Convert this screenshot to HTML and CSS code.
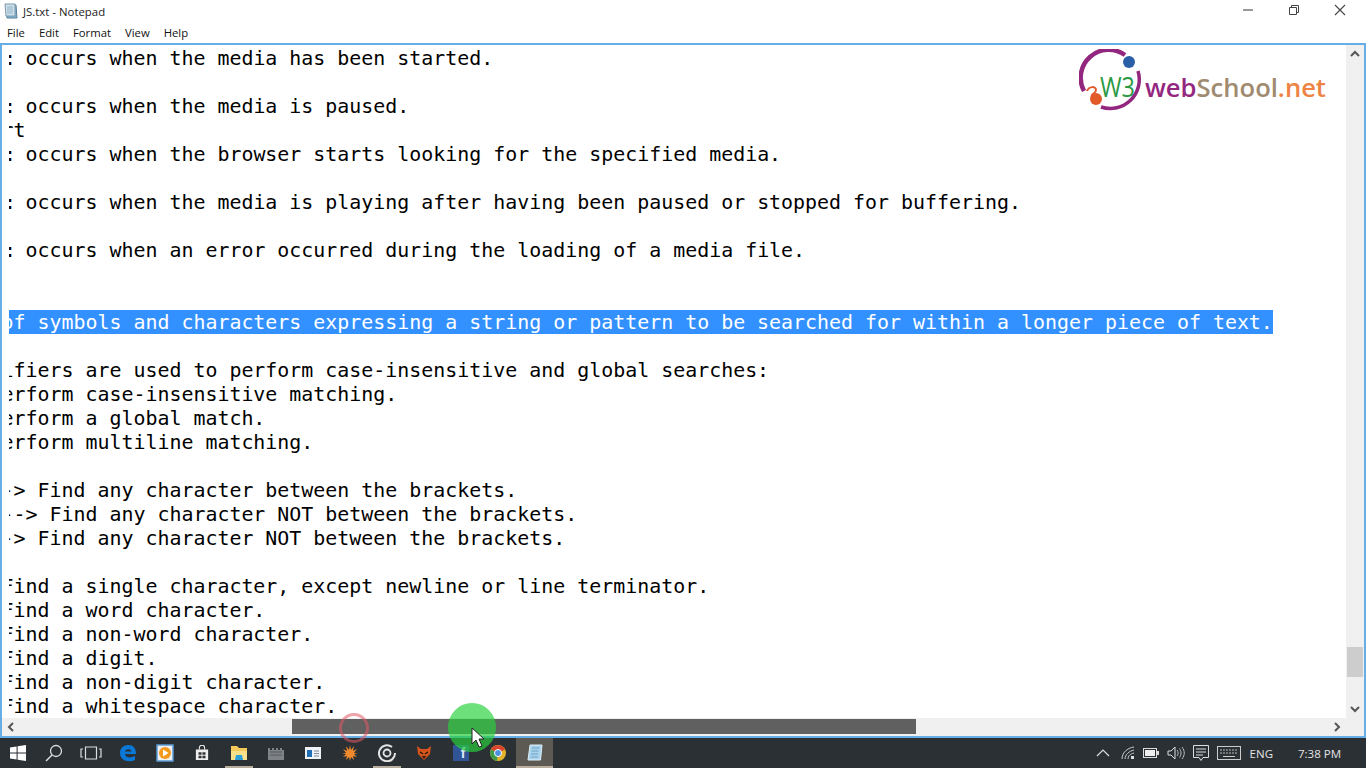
FILE: index.html
```html
<!DOCTYPE html>
<html lang="en">
<head>
    <meta charset="UTF-8">
    <meta name="viewport" content="width=device-width, initial-scale=1.0">
    <title>JS.txt - Notepad</title>
    <link rel="stylesheet" href="styles.css">
</head>
<body>
    <div class="window">
        <div class="titlebar">
            <svg class="app-icon" width="16" height="16" viewBox="0 0 16 16">
                <path d="M3 2h10l1 13H4z" fill="#7fb6d6" stroke="#5c7f96"/>
                <path d="M2 1h10v12H3z" fill="#cfe3ee" stroke="#7b97a8"/>
                <path d="M4 4h6M4 6h6M4 8h6M4 10h6" stroke="#93b2c4"/>
            </svg>
            <span class="title">JS.txt - Notepad</span>
            <div class="win-controls">
                <span class="win-btn"><svg width="12" height="12" viewBox="0 0 12 12"><path d="M1 6h10" stroke="#555" stroke-width="1.2"/></svg></span>
                <span class="win-btn"><svg width="12" height="12" viewBox="0 0 12 12"><path d="M1.5 3.5h7v7h-7zM3.5 3.5v-2h7v7h-2" fill="none" stroke="#444"/></svg></span>
                <span class="win-btn"><svg width="12" height="12" viewBox="0 0 12 12"><path d="M1 1l10 10M11 1L1 11" stroke="#444" stroke-width="1.1"/></svg></span>
            </div>
        </div>
        <div class="menubar">
            <span>File</span><span>Edit</span><span>Format</span><span>View</span><span>Help</span>
        </div>
        <div class="client">
            <div class="editor">
                <pre class="text"><span class="colon">:</span> occurs when the media has been started.

<span class="colon">:</span> occurs when the media is paused.
rt
<span class="colon">:</span> occurs when the browser starts looking for the specified media.

<span class="colon">:</span> occurs when the media is playing after having been paused or stopped for buffering.

<span class="colon">:</span> occurs when an error occurred during the loading of a media file.


<span class="selected">of symbols and characters expressing a string or pattern to be searched for within a longer piece of text.</span>

ifiers are used to perform case-insensitive and global searches:
erform case-insensitive matching.
erform a global match.
erform multiline matching.

-> Find any character between the brackets.
--> Find any character NOT between the brackets.
-> Find any character NOT between the brackets.

Find a single character, except newline or line terminator.
Find a word character.
Find a non-word character.
Find a digit.
Find a non-digit character.
Find a whitespace character.</pre>
            </div>
            <div class="vscroll">
                <svg class="arrow" width="18" height="18" viewBox="0 0 18 18"><path d="M5 11l4-4 4 4" fill="none" stroke="#555" stroke-width="2"/></svg>
                <div class="vtrack"><div class="vthumb"></div></div>
                <svg class="arrow" width="18" height="18" viewBox="0 0 18 18"><path d="M5 7l4 4 4-4" fill="none" stroke="#555" stroke-width="2"/></svg>
            </div>
            <div class="hscroll">
                <svg class="arrow" width="18" height="18" viewBox="0 0 18 18"><path d="M11 5L7 9l4 4" fill="none" stroke="#555" stroke-width="2"/></svg>
                <div class="htrack"><div class="hthumb"></div></div>
                <svg class="arrow" width="18" height="18" viewBox="0 0 18 18"><path d="M7 5l4 4-4 4" fill="none" stroke="#555" stroke-width="2"/></svg>
            </div>
            <div class="corner"></div>
        </div>
    </div>

    <div class="taskbar">
        <div class="task"><svg width="18" height="18" viewBox="0 0 18 18"><path d="M1 3.4l6.6-.9v6H1zM8.6 2.3L17 1v7.5H8.6zM1 9.6h6.6v6L1 14.6zM8.6 9.6H17V17l-8.4-1.2z" fill="#fff"/></svg></div>
        <div class="task"><svg width="20" height="20" viewBox="0 0 20 20"><circle cx="12" cy="8" r="5.5" fill="none" stroke="#ddd" stroke-width="1.3"/><path d="M8 12l-6 6" stroke="#ddd" stroke-width="1.5"/></svg></div>
        <div class="task"><svg width="22" height="16" viewBox="0 0 22 16"><path d="M5.5 2h11v12h-11zM3 4H1v8h2M19 4h2v8h-2" fill="none" stroke="#ddd" stroke-width="1.2"/></svg></div>
        <div class="task"><svg width="18" height="18" viewBox="0 0 18 18"><path d="M1 9C1 4 4.500 1 9.500 1 14 1 17 4 17 10H6c.3 3.500 5.500 4.500 10 2v4c-6 2.800-15 1-15-7zM6 7.400h6.500C12.300 4.500 6.500 4.500 6 7.400z" fill="#0a78d7"/></svg></div>
        <div class="task"><svg width="18" height="18" viewBox="0 0 18 18"><rect x="1" y="1" width="16" height="16" fill="#f0f0f0" stroke="#5b9bd5" stroke-width="1.500"/><circle cx="9" cy="9" r="6" fill="#f39a1e"/><path d="M7 5.500L12.500 9 7 12.500z" fill="#fff"/></svg></div>
        <div class="task"><svg width="14" height="16" viewBox="0 0 16 18"><path d="M1 5h14v12H1z" fill="#eee"/><path d="M5 5V3a3 3 0 0 1 6 0v2" fill="none" stroke="#eee" stroke-width="1.200"/><path d="M4 8h3.500v3H4zM8.500 8H12v3H8.500zM4 12h3.500v3H4zM8.500 12H12v3H8.500z" fill="#2f3337"/></svg></div>
        <div class="task task-open"><svg width="18" height="16" viewBox="0 0 18 16"><path d="M1 1h6l2 2h8v12H1z" fill="#f5c95c"/><path d="M1 6h16v9H1z" fill="#fbe08c"/><path d="M6 10h6l1 5H5z" fill="#2c9fd8"/></svg></div>
        <div class="task"><svg width="16" height="14" viewBox="0 0 16 14"><path d="M0 2h2v2h2V2h2v2h2V2h2v2h2V2h2v2h2v10H0z" fill="#7f8387"/><path d="M2 6h12M2 9h12" stroke="#56595c"/></svg></div>
        <div class="task"><svg width="16" height="12" viewBox="0 0 16 12"><rect width="16" height="12" fill="#eef1f5"/><rect x="2" y="3" width="5" height="7" fill="#1f6db5"/><path d="M9 4h5M9 6.500h5M9 9h5" stroke="#7c8a99"/></svg></div>
        <div class="task"><svg width="16" height="16" viewBox="0 0 16 16"><path d="M8 0l1 5 3-4-1 5 4-2-3 4 4 0-4 1 3 3-4-1 1 4-3-3-1 4-1-4-3 3 1-4-4 1 3-3-4-1 4 0-3-4 4 2-1-5 3 4z" fill="#f08a2c"/></svg></div>
        <div class="task task-open"><svg width="18" height="18" viewBox="0 0 18 18"><path d="M14 3a8 8 0 1 0 3 6" fill="none" stroke="#e4e4e4" stroke-width="2"/><circle cx="9" cy="9" r="3.500" fill="none" stroke="#e4e4e4" stroke-width="1.800"/></svg></div>
        <div class="task"><svg width="16" height="16" viewBox="0 0 16 16"><path d="M1 1l4 3h6l4-3-1 8-6 6-6-6z" fill="#d4541c"/><path d="M4 7l3 2M12 7L9 9" stroke="#2a1608" stroke-width="1.500"/><path d="M6 11h4l-2 3z" fill="#2a1608"/></svg></div>
        <div class="task"><div class="fb">f</div></div>
        <div class="task"><svg width="16" height="16" viewBox="0 0 16 16"><circle cx="8" cy="8" r="8" fill="#e2b32a"/><path d="M8 8L1 4.500A8 8 0 0 1 15 4.500z" fill="#d9432f"/><path d="M8 8l-7-3.500A8 8 0 0 0 7 16z" fill="#3d9b4a"/><circle cx="8" cy="8" r="3.500" fill="#4a8fe0" stroke="#fff"/></svg></div>
        <div class="task task-active"><svg width="16" height="18" viewBox="0 0 16 18"><path d="M3 2h12l-1.500 15H1z" fill="#a9d3ec" stroke="#dff0f9"/><path d="M5 5h7M4.500 8h7M4 11h7M3.800 14h7" stroke="#6fa3c4"/></svg></div>

        <div class="tray">
            <svg width="14" height="14" viewBox="0 0 14 14"><path d="M1 10l6-6 6 6" fill="none" stroke="#ddd" stroke-width="1.200"/></svg>
            <svg class="tray-wifi" width="14" height="14" viewBox="0 0 14 14"><path d="M1 13C1 7 6 2 13 1M4 13c0-4 4-8 9-9M7 13c0-3 2-5 6-6" fill="none" stroke="#ccc"/><path d="M10 10h3v3h-3z" fill="#ddd"/></svg>
            <svg width="16" height="10" viewBox="0 0 16 10"><rect x=".5" y=".5" width="13" height="9" fill="none" stroke="#ddd"/><rect x="2" y="2" width="10" height="6" fill="#eee"/><path d="M14 3h2v4h-2z" fill="#ddd"/></svg>
            <svg width="18" height="14" viewBox="0 0 18 14"><path d="M1 5h3l4-4v12L4 9H1z" fill="none" stroke="#ddd"/><path d="M10 4c1.500 2 1.500 4 0 6M12.500 2.500c2 3 2 6 0 9M15 1c3 4 3 8 0 12" fill="none" stroke="#bbb"/></svg>
            <svg width="16" height="17" viewBox="0 0 16 17"><path d="M.5.500h15v12H10l-2 3-2-3H.5z" fill="none" stroke="#ddd"/><path d="M3 4h10M3 7h10M3 10h7" stroke="#ddd"/></svg>
            <svg width="24" height="14" viewBox="0 0 24 14"><rect x=".5" y=".5" width="23" height="13" fill="none" stroke="#ccc"/><path d="M3 4h18M3 7h18" stroke="#bbb" stroke-dasharray="2 1"/><path d="M6 10.500h12" stroke="#ccc"/></svg>
            <span class="lang">ENG</span>
            <span class="clock">7:38 PM</span>
        </div>
    </div>

    <!-- watermark + recorder overlays -->
    <svg class="logo" width="250" height="64" viewBox="0 0 250 64">
        <path d="M46 6A28 28 0 0 0 5 42" fill="none" stroke="#93277f" stroke-width="4.500"/>
        <path d="M59 22A29 29 0 0 1 22 58" fill="none" stroke="#93277f" stroke-width="3.500"/>
        <circle cx="50" cy="13" r="6" fill="#2a5fa8"/>
        <circle cx="17" cy="50" r="6" fill="#e2592a"/>
        <path d="M8 42c2-5 9-5 9-1s-6 4-4 7" fill="none" stroke="#e2592a" stroke-width="2"/>
        <text class="logo-w3" x="21" y="48" textLength="35" lengthAdjust="spacingAndGlyphs">W3</text>
        <text class="logo-name" x="66" y="48" textLength="181" lengthAdjust="spacingAndGlyphs"><tspan fill="#93277f">web</tspan><tspan fill="#a08a70">School</tspan><tspan fill="#ee8343">.net</tspan></text>
    </svg>
    <div class="click-ring"></div>
    <div class="click-dot"></div>
    <svg class="cursor" width="14" height="21" viewBox="0 0 14 21"><path d="M1 1v16l4-4 3 7 3-1-3-7h5z" fill="#fff" stroke="#222"/></svg>
</body>
</html>
```

FILE: styles.css
```css
* {
    box-sizing: border-box;
}
html, body {
    margin: 0;
    padding: 0;
    height: 100%;
    overflow: hidden;
}
body {
    width: 1366px;
    height: 768px;
    display: flex;
    flex-direction: column;
    position: relative;
    background: #fff;
    font-family: "Open Sans", "Noto Sans", sans-serif;
}

/* notepad window */
.window {
    height: 738px;
    display: flex;
    flex-direction: column;
}
.titlebar {
    height: 22px;
    display: flex;
    align-items: center;
    padding-left: 3px;
    font-size: 11.4px;
    color: #222;
}
.app-icon {
    margin-right: 4px;
}
.win-controls {
    margin-left: auto;
    margin-right: 3px;
    display: flex;
    align-self: flex-start;
}
.win-btn {
    width: 46px;
    height: 20px;
    display: flex;
    align-items: center;
    justify-content: center;
}
.menubar {
    height: 21px;
    display: flex;
    align-items: center;
    gap: 14px;
    padding-left: 7px;
    font-size: 11.3px;
    color: #111;
}

.client {
    flex: 1;
    min-height: 0;
    display: grid;
    grid-template-columns: 1fr 18px;
    grid-template-rows: 1fr 18px;
    border: 2px solid #67aee6;
}
.editor {
    overflow: hidden;
    margin-left: 7px;
    padding-top: 2px;
}
.text {
    margin: 0 0 0 -7.5px;
    font-family: "DejaVu Sans Mono", "Liberation Mono", monospace;
    font-size: 19.93px;
    line-height: 24px;
    color: #000;
}
/* the colon sits a little right of its cell in the original font */
.colon {
    margin-left: 2.5px;
    margin-right: -2.5px;
}
.selected {
    display: inline-block;
    height: 23px;
    margin-bottom: 1px;
    background: #3390ff;
    box-shadow: 0 -1px 0 #3390ff;
    color: #fff;
}

/* scrollbars */
.vscroll {
    background: #f0f0f0;
    display: flex;
    flex-direction: column;
}
.vtrack {
    flex: 1;
    padding-top: 584px;
}
.vthumb {
    width: 16px;
    height: 30px;
    margin-left: 1px;
    background: #cdcdcd;
}
.hscroll {
    background: #f0f0f0;
    display: flex;
    align-items: center;
}
.htrack {
    flex: 1;
    height: 100%;
    padding: 1px 0 2px 272px;
}
.hthumb {
    width: 624px;
    height: 100%;
    background: #606060;
}
.arrow {
    flex: none;
}
.corner {
    background: #f0f0f0;
}

/* taskbar */
.taskbar {
    height: 30px;
    display: flex;
    background: #2b3035;
}
.task {
    width: 37px;
    height: 30px;
    display: flex;
    align-items: center;
    justify-content: center;
}
.task:first-child {
    width: 35px;
}
.task-open {
    background: linear-gradient(#b9ae9d, #b9ae9d) center bottom / 28px 2px no-repeat;
}
.task-active {
    background: #5c5a53;
    border-bottom: 2px solid #b9ae9d;
}
.fb {
    width: 16px;
    height: 16px;
    background: #2f5597;
    color: #dfe7f5;
    font: bold 14px/17px "Liberation Sans", sans-serif;
    text-align: right;
    padding-right: 3px;
}
.tray {
    margin-left: auto;
    display: flex;
    align-items: center;
    gap: 8px;
    padding-right: 25px;
    color: #e4e4e4;
    font-size: 11.5px;
    border-right: 0;
}
.tray-wifi {
    margin-left: 3px;
}
.lang {
    margin-left: 1px;
}
.clock {
    margin-left: 17px;
}

/* overlays */
.logo {
    position: absolute;
    left: 1079px;
    top: 49px;
}
.logo-w3 {
    font-family: "Open Sans", sans-serif;
    font-size: 28px;
    fill: #2c9a45;
}
.logo-name {
    font-family: "Open Sans", sans-serif;
    font-size: 25px;
    font-weight: 600;
}
.click-ring {
    position: absolute;
    left: 339px;
    top: 713px;
    width: 30px;
    height: 30px;
    border: 3px solid rgba(224, 90, 100, 0.55);
    border-radius: 50%;
}
.click-dot {
    position: absolute;
    left: 448px;
    top: 703px;
    width: 48px;
    height: 49px;
    border-radius: 50%;
    background: rgba(40, 210, 60, 0.68);
}
.cursor {
    position: absolute;
    left: 471px;
    top: 727px;
}
```
